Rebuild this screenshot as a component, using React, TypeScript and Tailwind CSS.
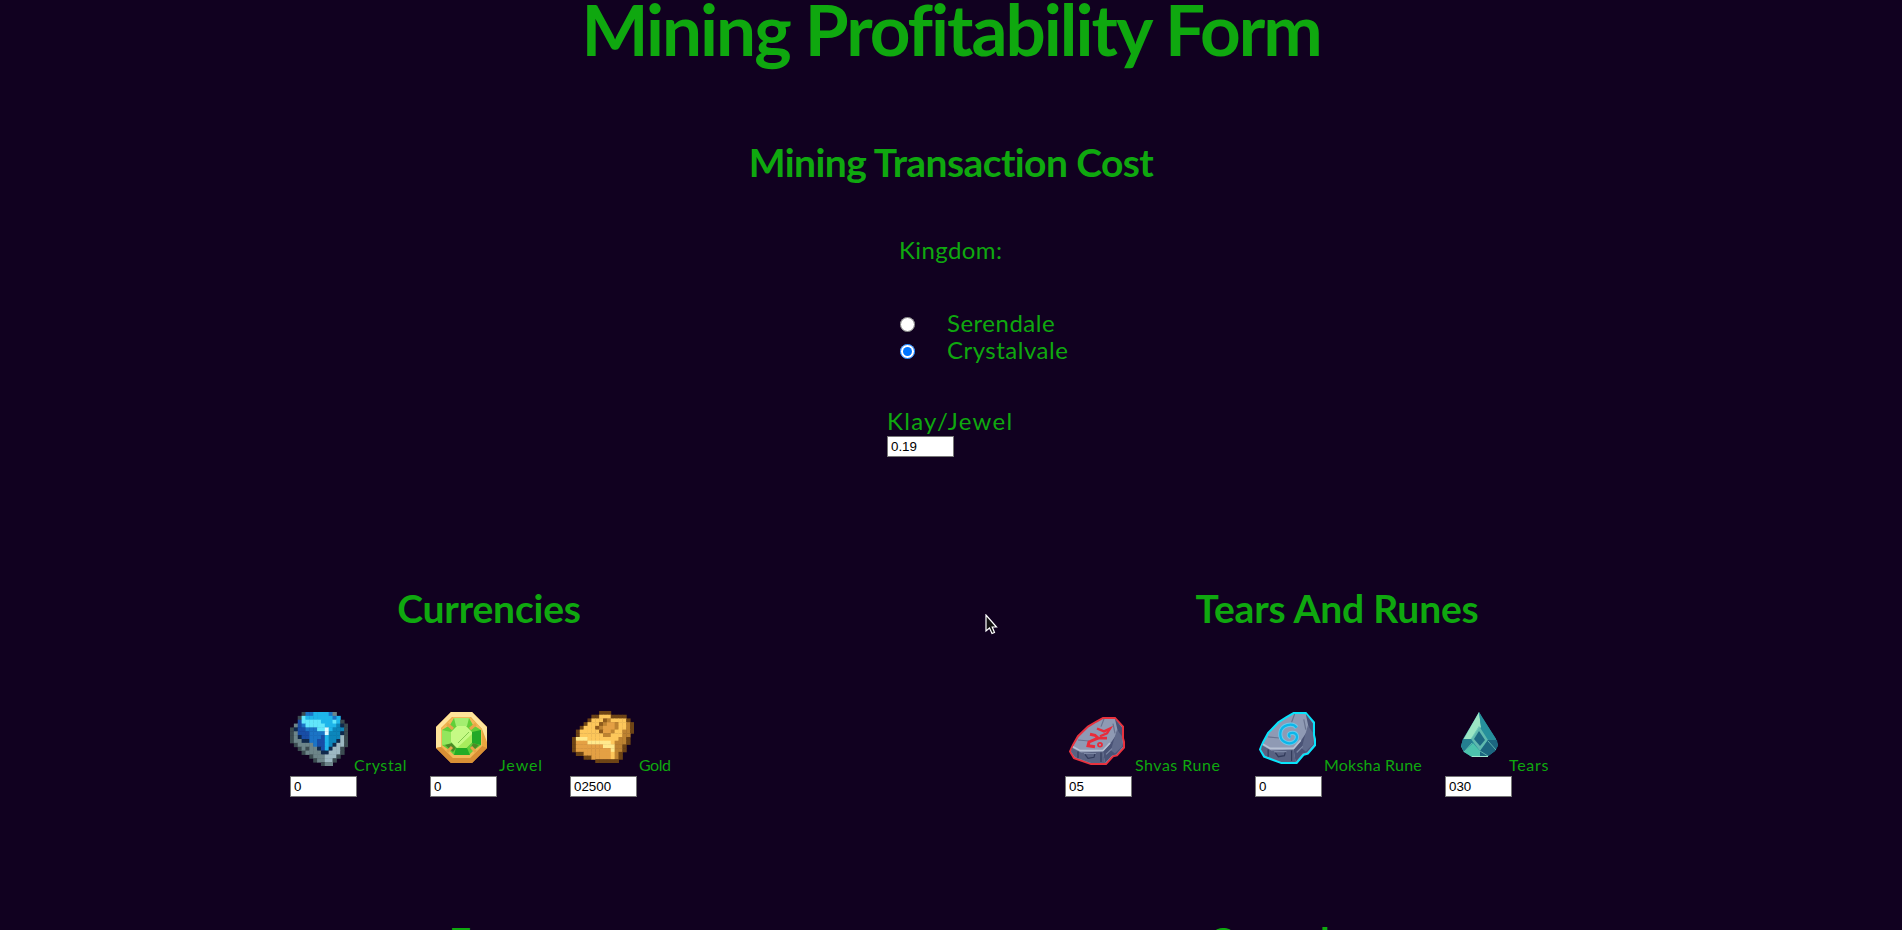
import React from "react";

const crystalRows = [
  "...Gmmccccmg...",
  "..Gscccccccmc..",
  "..bssssscccscG.",
  ".gbmsssssccctnG",
  "GnbbmmmsswctttG",
  "GgbbbmmmmwtttnG",
  "GgnbbmmmbctttlG",
  "GggnnmmbbcttnlG",
  ".GggggmbbctnllG",
  "..GgGggnbcnllG.",
  "...GggggnnlllG.",
  ".....GggglllG..",
  "......GggllG...",
  "........Ggg....",
];
const crystalColors: Record<string, string> = {
  G: "#3b4b50", g: "#6d8589", l: "#9db8c2", n: "#10294c", b: "#184da6",
  m: "#1b74c6", c: "#1eb5ea", s: "#62e7fb", t: "#0c86bb", w: "#dffaff",
};

const goldRows = [
  ".......DDD......",
  ".....DDyyyDDDD..",
  "....DyyydkyyyyD.",
  "...DyyydkookyykD",
  "..DyyydkoookyykD",
  ".DyyyyydookyykkD",
  ".Dyyyyyykkyyykk.",
  "DYYYyyyyyyyykkD.",
  "DoooYYYYYYykkkD.",
  "DoooooooYYYkkD..",
  "DoooooooooYkkD..",
  ".DDoooooooykD...",
  "...DDoooooykD...",
  "......DDDDDD....",
];
const goldColors: Record<string, string> = {
  D: "#6e4415", o: "#e4a044", y: "#fdc75b", Y: "#ffe98c", k: "#bd8331", d: "#8f5b1c",
};

function PixelArt({ rows, colors, className }: { rows: string[]; colors: Record<string, string>; className: string }) {
  return (
    <svg className={className} viewBox={`0 0 ${rows[0].length} ${rows.length}`} preserveAspectRatio="none">
      {rows.flatMap((row, y) =>
        row.split("").map((c, x) =>
          colors[c] ? <rect key={`${x}-${y}`} x={x} y={y} width="1.12" height="1.12" fill={colors[c]} /> : null,
        ),
      )}
    </svg>
  );
}

function JewelIcon() {
  return (
    <svg className="ml-[6px] mt-[2px] h-[51px] w-[51px] shrink-0" viewBox="0 0 51 51">
      <path d="M15 0H36L51 15V36L36 51H15L0 36V15Z" fill="#e9a63f" />
      <path d="M15 0H36L51 15V30L46 17L35 5H16L5 16V35L0 36V15Z" fill="#ffe49a" />
      <path d="M0 36L15 51H36L51 36L46 34L34 46H17L5 35Z" fill="#d98f35" />
      <path d="M17 5H34L46 17V34L34 46H17L5 34V17Z" fill="#f2b957" />
      <path d="M18 6H33L37 13L45 18V33L38 38L33 43H18L13 38L6 33V18L14 13Z" fill="#61cf39" />
      <path d="M18 6H33L31 14H20Z" fill="#a4ee70" />
      <path d="M6 18L15 20V32L6 33Z" fill="#93e65d" />
      <path d="M45 18L36 20V31L45 33Z" fill="#22a928" />
      <path d="M18 43L20 36H31L34 43Z" fill="#24ac26" />
      <path d="M9 33L16 31L20 36L17 40ZM34 37L37 31L43 33L38 38Z" fill="#4c8a27" />
      <path d="M21 14H30L36 20V30L30 36H21L15 30V20Z" fill="#c6fa85" />
      <path d="M36 22V30L30 36H21Z" fill="#a8ec5d" />
      <path d="M22 31L33 20" stroke="#82c94e" strokeWidth="1" />
      <path d="M11 12L17 17M40 12L34 17M11 40L16 35M40 40L35 35" stroke="#e7a649" strokeWidth="3" />
    </svg>
  );
}

function Stone({ outline, children, className }: { outline: string; children: React.ReactNode; className: string }) {
  return (
    <svg className={className} viewBox="0 0 56 50" preserveAspectRatio="none">
      <path d="M34 1H46L54 10V22L55 26V32L48 40L44 41L37 49H22L5 43L1 36L4 29L9 20L19 10L27 5Z" fill="#8f9ab4" stroke={outline} strokeWidth="2" />
      <path d="M46 2L53 11V22L54 31L47 39L43 40L36 48L34 36L41 28L49 16Z" fill="#4a5376" />
      <path d="M48 13L53 20V31L46 38L42 35L44 27Z" fill="#606a8b" />
      <path d="M3 32L12 37L34 36L36 48H22L6 42L2 36Z" fill="#596282" />
      <path d="M4 31L11 35L34 35L41 27" fill="none" stroke="#b6c0d3" strokeWidth="1.6" />
      <path d="M35 2L32 10M9 24L20 25M44 7L46 17" fill="none" stroke="#69738f" strokeWidth="1.2" />
      <path d="M16 39L19 43L25 42L26 38M32 37V47M9 36V43" fill="none" stroke="#323b5b" strokeWidth="1.2" />
      <path d="M15 38H27M37 39L43 33" stroke="#7d88a5" strokeWidth="1.2" />
      {children}
    </svg>
  );
}

function ShvasIcon() {
  return (
    <Stone outline="#e8323e" className="ml-[4px] mt-[7px] h-[48px] w-[56px] shrink-0">
      <g fill="none" stroke="#e92c3a">
        <path d="M28 12L35 15L41 12L38 17L31 20" strokeWidth="2.4" />
        <path d="M21 18L26 19L29 22L38 22" strokeWidth="3" />
        <path d="M29 22L20 26L19 30L26 31" strokeWidth="3" />
        <circle cx="31" cy="29" r="2" strokeWidth="1.8" />
      </g>
    </Stone>
  );
}

function MokshaIcon() {
  return (
    <Stone outline="#08e4fb" className="ml-[4px] mt-[2px] h-[52px] w-[57px] shrink-0">
      <path d="M37 15C33 10 22 12 21 20C20 28 28 32 34 29C39 26 38 20 33 20C29 20 28 23 31 24" fill="none" stroke="#6cc9ea" strokeWidth="4" />
      <path d="M37 15C33 10 22 12 21 20C20 28 28 32 34 29C39 26 38 20 33 20C29 20 28 23 31 24" fill="none" stroke="#0bb7ea" strokeWidth="2.2" />
    </Stone>
  );
}

function TearIcon() {
  return (
    <svg className="ml-[15px] mt-[2px] h-[45px] w-[39px] shrink-0" viewBox="0 0 39 45">
      <path d="M19 0L23 7L36 27L38 33L35 39L27 45H12L4 40L1 34L3 27L15 7Z" fill="#2c8e9b" />
      <path d="M19 0L21 15L11 27L3 28L15 7Z" fill="#9be5c4" />
      <path d="M19 0L36 27L27 27L21 15Z" fill="#26909c" />
      <path d="M19 14L28 28L20 39L11 27Z" fill="#5fb9ae" />
      <path d="M19 19L25 28L20 34L14 27Z" fill="#1d6983" />
      <path d="M28 28L37 28L38 34L35 39L27 45H20V39Z" fill="#1c6680" />
      <path d="M1 34L12 30L20 39V45H12L4 40Z" fill="#4cc3ac" />
      <path d="M3 27L11 27L13 31L4 40L1 34Z" fill="#247f91" />
      <path d="M4 40L12 31M28 29L36 38M11 27L19 15M20 39L28 44" stroke="#77d1bd" strokeWidth="0.7" />
      <path d="M12 44.5H28" stroke="#a1ead0" />
    </svg>
  );
}

function NumberBox({ value }: { value: string }) {
  return (
    <input
      className="block h-[21px] w-[67px] border border-[#767676] bg-white px-[3px] py-0 font-['Liberation_Sans',sans-serif] text-[13.33px] leading-[17px] text-black outline-none"
      defaultValue={value}
    />
  );
}

function Item({ icon, label, value, labelClass, className }: { icon: React.ReactNode; label: string; value: string; labelClass: string; className: string }) {
  return (
    <div className={className}>
      <label className="flex h-[66px]">
        <span className="flex w-[65px] shrink-0 items-start">{icon}</span>
        <span className={`self-end whitespace-nowrap pb-px text-[16px] leading-[20px] ${labelClass}`}>{label}</span>
      </label>
      <NumberBox value={value} />
    </div>
  );
}

const heading = "h-[40px] whitespace-nowrap text-[39px] font-bold leading-[40px]";

export default function App() {
  return (
    <main className="relative flex h-[930px] w-full flex-col overflow-hidden bg-[#110120] font-['Lato',sans-serif] text-[#0fa80f]">
      <h1 className="h-[57px] whitespace-nowrap text-center text-[71px] font-bold leading-[57px] tracking-[-2px]">Mining Profitability Form</h1>
      <h2 className={`mt-[85px] text-center tracking-[-0.6px] ${heading}`}>Mining Transaction Cost</h2>

      <section className="ml-[887px] mt-[54px] flex flex-col text-[24px] leading-[27px]">
        <p className="ml-[12px] tracking-[0.4px]">Kingdom:</p>
        <div className="ml-[13px] mt-[46px] flex flex-col tracking-[0.5px]">
          <label className="flex h-[27px] items-center">
            <input type="radio" name="kingdom" className="mb-0 ml-0 mr-0 mt-[3px] h-[15px] w-[15px]" />
            <span className="ml-[32px]">Serendale</span>
          </label>
          <label className="flex h-[27px] items-center">
            <input type="radio" name="kingdom" defaultChecked className="mb-0 ml-0 mr-0 mt-[3px] h-[15px] w-[15px]" />
            <span className="ml-[32px]">Crystalvale</span>
          </label>
        </div>
        <label className="mt-[44px] pb-[2px] tracking-[1.3px]">Klay/Jewel</label>
        <NumberBox value="0.19" />
      </section>

      <div className="mt-[131px] flex">
        <section className="ml-[290px] w-[420px]">
          <h2 className={`w-[398px] text-center tracking-[-0.2px] ${heading}`}>Currencies</h2>
          <div className="mt-[82px] flex">
            <Item className="w-[140px]" icon={<PixelArt rows={crystalRows} colors={crystalColors} className="mt-[2px] h-[54px] w-[58px]" />} label="Crystal" value="0" labelClass="-ml-px tracking-[0.6px]" />
            <Item className="w-[140px]" icon={<JewelIcon />} label="Jewel" value="0" labelClass="ml-[4px] tracking-[0.9px]" />
            <Item className="w-[140px]" icon={<PixelArt rows={goldRows} colors={goldColors} className="ml-[2px] mt-[1px] h-[52px] w-[62px]" />} label="Gold" value="02500" labelClass="ml-[4px] tracking-[-0.5px]" />
          </div>
          <h2 className={`mt-[124px] pl-[159px] ${heading}`}>Eggs</h2>
        </section>
        <section className="ml-[355px] w-[570px]">
          <h2 className={`w-[544px] text-center tracking-[-0.2px] ${heading}`}>Tears And Runes</h2>
          <div className="mt-[82px] flex">
            <Item className="w-[190px]" icon={<ShvasIcon />} label="Shvas Rune" value="05" labelClass="ml-[5px] tracking-[0.5px]" />
            <Item className="w-[190px]" icon={<MokshaIcon />} label="Moksha Rune" value="0" labelClass="ml-[4px] tracking-[0.2px]" />
            <Item className="w-[190px]" icon={<TearIcon />} label="Tears" value="030" labelClass="-ml-px tracking-[0.7px]" />
          </div>
          <h2 className={`mt-[124px] pl-[143px] ${heading}`}>Crystals</h2>
        </section>
      </div>

      <svg className="absolute left-[985px] top-[614px] h-[21px] w-[13px]" viewBox="0 0 13 21">
        <path d="M1 1V17L4.5 14L7 19.5L9.5 18.5L7.2 13H11.5Z" fill="#111" stroke="white" strokeWidth="1.2" />
      </svg>
    </main>
  );
}
